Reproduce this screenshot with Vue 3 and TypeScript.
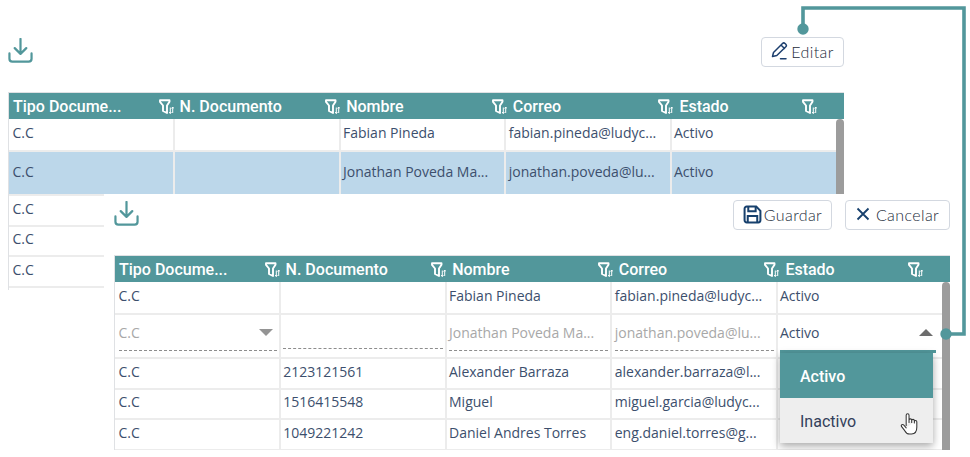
<script setup lang="ts">
const headers = ['Tipo Docume...', 'N. Documento', 'Nombre', 'Correo', 'Estado']
const topRows = [
  { cells: ['C.C', '', 'Fabian Pineda', 'fabian.pineda@ludyc...', 'Activo'], cls: 'first' },
  { cells: ['C.C', '', 'Jonathan Poveda Ma...', 'jonathan.poveda@lu...', 'Activo'], cls: 'selected tall' },
  { cells: ['C.C', '', '', '', ''], cls: '' },
  { cells: ['C.C', '', '', '', ''], cls: '' },
  { cells: ['C.C', '', '', '', ''], cls: '' },
]
const lowerRows = [
  ['C.C', '2123121561', 'Alexander Barraza', 'alexander.barraza@l...', ''],
  ['C.C', '1516415548', 'Miguel', 'miguel.garcia@ludyc...', ''],
  ['C.C', '1049221242', 'Daniel Andres Torres', 'eng.daniel.torres@g...', ''],
]
</script>

<template>
  <div class="page">
    <section class="view">
      <div class="toolbar">
        <svg class="dl" viewBox="0 0 26 26" width="25" height="25"><path d="M13 1v15M7 10.500l6 6 6-6M1.500 16v5.500a3 3 0 0 0 3 3h17a3 3 0 0 0 3-3V16" fill="none" stroke="#52979b" stroke-width="2.300" stroke-linecap="round" stroke-linejoin="round"/></svg>
        <button class="btn edit">
          <svg viewBox="0 0 18 18" width="18" height="18"><path d="M1.500 14.500l1-4L11.500 1.500a1.800 1.800 0 0 1 2.500 0l.8.8a1.800 1.800 0 0 1 0 2.500L5.800 13.500zM10 3l3.500 3.500M9.500 16.800h5.500" fill="none" stroke="#1d3f6e" stroke-width="1.500" stroke-linecap="round" stroke-linejoin="round"/></svg>
          Editar
        </button>
      </div>
      <div class="grid top">
        <div class="head">
          <div v-for="h in headers" :key="h" class="hcell">
            <span>{{ h }}</span>
            <svg class="filter" viewBox="0 0 15 15" width="15" height="15"><path d="M1 1.200h9.500v1.600L8 6.500v7.500L4 12V6.500L1 2.800z" fill="none" stroke="#fff" stroke-width="1.900" stroke-linejoin="round"/><path d="M11.300 8.500v6M13.700 8v6M10.200 13l1.100 1.500 1.100-1.500M12.600 9.500l1.100-1.500 1.100 1.500" fill="none" stroke="#fff" stroke-width="1"/></svg>
          </div>
        </div>
        <div class="body">
          <div v-for="(r, i) in topRows" :key="i" class="row" :class="r.cls">
            <div v-for="(c, j) in r.cells" :key="j" class="cell">{{ c }}</div>
          </div>
          <div class="thumb"></div>
        </div>
      </div>
    </section>

    <section class="panel">
      <div class="toolbar">
        <svg class="dl" viewBox="0 0 26 26" width="25" height="25"><path d="M13 1v15M7 10.500l6 6 6-6M1.500 16v5.500a3 3 0 0 0 3 3h17a3 3 0 0 0 3-3V16" fill="none" stroke="#52979b" stroke-width="2.300" stroke-linecap="round" stroke-linejoin="round"/></svg>
        <div class="actions">
          <button class="btn save">
            <svg viewBox="0 0 18 18" width="19" height="19"><path d="M1.500 3.500a2 2 0 0 1 2-2h9l4 4v9a2 2 0 0 1-2 2h-11a2 2 0 0 1-2-2z" fill="none" stroke="#17406d" stroke-width="1.900"/><path d="M5 1.500v4.500h7V1.500M4.500 16.500V10.500h9v6" fill="none" stroke="#17406d" stroke-width="1.900"/></svg>
            Guardar
          </button>
          <button class="btn cancel">
            <svg viewBox="0 0 14 14" width="14" height="14"><path d="M1.500 1.500l11 11M12.500 1.500l-11 11" fill="none" stroke="#17406d" stroke-width="1.800"/></svg>
            Cancelar
          </button>
        </div>
      </div>
      <div class="grid lower">
        <div class="head">
          <div v-for="h in headers" :key="h" class="hcell">
            <span>{{ h }}</span>
            <svg class="filter" viewBox="0 0 15 15" width="15" height="15"><path d="M1 1.200h9.500v1.600L8 6.500v7.500L4 12V6.500L1 2.800z" fill="none" stroke="#fff" stroke-width="1.900" stroke-linejoin="round"/><path d="M11.300 8.500v6M13.700 8v6M10.200 13l1.100 1.500 1.100-1.500M12.600 9.500l1.100-1.500 1.100 1.500" fill="none" stroke="#fff" stroke-width="1"/></svg>
          </div>
        </div>
        <div class="body">
          <div class="row first">
            <div class="cell">C.C</div><div class="cell"></div><div class="cell">Fabian Pineda</div><div class="cell">fabian.pineda@ludyc...</div><div class="cell">Activo</div>
          </div>
          <div class="row tall editing">
            <div class="cell"><div class="field muted dotted"><span>C.C</span><i class="caret down"></i></div></div>
            <div class="cell"><div class="field muted dotted low"></div></div>
            <div class="cell"><div class="field muted dotted"><span>Jonathan Poveda Ma...</span></div></div>
            <div class="cell"><div class="field muted dotted"><span>jonathan.poveda@lu...</span></div></div>
            <div class="cell"><div class="field active"><span>Activo</span><i class="caret up"></i></div></div>
          </div>
          <div v-for="(r, i) in lowerRows" :key="i" class="row">
            <div v-for="(c, j) in r" :key="j" class="cell">{{ c }}</div>
          </div>
          <div class="thumb"></div>
          <div class="menu">
            <div class="opt on">Activo</div>
            <div class="opt hover">Inactivo</div>
            <svg class="hand" viewBox="0 0 20 26" width="19" height="25"><path d="M6.500 14V3.200a1.500 1.500 0 0 1 3 0V11m0-2.500a1.400 1.400 0 0 1 2.800 0V11m0-2a1.400 1.400 0 0 1 2.800 0v2.500m0-1.500a1.300 1.300 0 0 1 2.600 0v6c0 4-2 7-5.500 7H10c-2.500 0-4-1.500-5-3.500L1.500 15c-.8-1.400 1.200-2.700 2.300-1.500l2.700 3" fill="#fff" stroke="#333" stroke-width="1.100" stroke-linejoin="round" stroke-linecap="round"/></svg>
          </div>
        </div>
      </div>
    </section>

    <svg class="wire" viewBox="0 0 970 457" width="970" height="457">
      <path d="M803 29V8H964V334H946" fill="none" stroke="#52979b" stroke-width="3.600"/>
      <circle cx="803" cy="29" r="5.700" fill="#52979b"/>
      <circle cx="946" cy="334" r="5.700" fill="#52979b"/>
    </svg>
  </div>
</template>

<style scoped>
.page {
  position: relative;
  width: 970px;
  height: 457px;
  overflow: hidden;
  background: #fff;
  font-family: "Open Sans", sans-serif;
  color: #3c4f6d;
}
.view {
  width: 836px;
  margin-left: 8px;
  padding-top: 37px;
}
.toolbar {
  display: flex;
  justify-content: space-between;
  align-items: flex-start;
  height: 55px;
}
.dl {
  display: block;
  margin-top: 1px;
}
.btn {
  display: inline-flex;
  align-items: center;
  justify-content: center;
  gap: 2px;
  height: 30px;
  box-sizing: border-box;
  border: 1px solid #d3d8e0;
  border-radius: 4px;
  background: #fff;
  padding: 0 0 2px;
  font-family: "Lato", sans-serif;
  font-size: 16px;
  font-weight: 300;
  letter-spacing: 0.4px;
  color: #222b3a;
}
.edit {
  width: 83px;
}
.save {
  width: 99px;
}
.cancel {
  width: 105px;
  gap: 6px;
}
.actions {
  display: flex;
  gap: 13px;
}
.grid {
  border-left: 1px solid #dfe1e4;
  overflow: hidden;
}
.top {
  height: 198px;
}
.lower {
  height: 195px;
}
.head {
  display: grid;
  grid-template-columns: repeat(4, 166.6px) 1fr;
  height: 26px;
  background: #52979b;
  border-top: 1px solid #dfe1e4;
}
.hcell {
  position: relative;
  display: flex;
  align-items: center;
  padding-left: 4px;
  font-family: "Roboto", sans-serif;
  font-weight: 500;
  font-size: 16px;
  color: #fff;
}
.filter {
  position: absolute;
  top: 6px;
  right: 2px;
}
.hcell:last-child .filter {
  right: 27px;
}
.body {
  position: relative;
  padding-right: 8px;
}
.row {
  display: grid;
  grid-template-columns: repeat(4, 165.75px) 1fr;
  height: 28.5px;
  border-bottom: 2px solid #ececec;
}
.row.first {
  height: 30.5px;
}
.row.tall {
  height: 42.5px;
}
.cell {
  border-right: 2px solid #ececec;
  padding: 2.500px 2px 0 2.500px;
  font-size: 14px;
  line-height: 20px;
  white-space: nowrap;
  overflow: hidden;
  box-sizing: border-box;
}
.cell:first-child {
  padding-left: 3.500px;
}
.cell:last-child {
  border-right: 0;
  padding-left: 2px;
}
.first .cell {
  padding-top: 4px;
}
.selected {
  background: #bcd7ea;
}
.selected .cell {
  padding-top: 10px;
}
.thumb {
  position: absolute;
  top: 0;
  right: 0;
  bottom: 0;
  width: 8px;
  background: #9c9c9c;
  border-radius: 4px 4px 0 0;
}
.panel {
  position: absolute;
  left: 104px;
  top: 194px;
  width: 866px;
  height: 263px;
  background: #fff;
  padding: 6px 20px 0 10px;
  box-sizing: border-box;
}
.field {
  display: flex;
  align-items: center;
  justify-content: space-between;
  height: 35px;
  box-sizing: border-box;
}
.editing .cell {
  padding-top: 1px;
}
.muted {
  color: #a8a8a8;
}
.dotted {
  border-bottom: 1px dashed #8d8d8d;
}
.low {
  height: 33px;
}
.active {
  height: 37px;
  margin-right: 4px;
  border-bottom: 3px solid #52979b;
  color: #3c4f6d;
}
.caret {
  width: 0;
  height: 0;
  border-left: 7px solid transparent;
  border-right: 7px solid transparent;
  margin-right: 4px;
}
.down {
  border-top: 7px solid #949494;
}
.up {
  border-bottom: 7px solid #6d6d6d;
  margin-right: 3px;
}
.menu {
  position: absolute;
  top: 71px;
  left: 665px;
  width: 153px;
  height: 90px;
  box-shadow: 0 3px 8px rgba(0, 0, 0, 0.35);
}
.opt {
  display: flex;
  align-items: center;
  height: 45px;
  box-sizing: border-box;
  padding: 2px 0 0 20px;
  font-family: "Roboto", sans-serif;
  font-size: 16px;
}
.on {
  background: #52979b;
  color: #fff;
  font-weight: 500;
}
.hover {
  background: #eeeeee;
  color: #33405a;
}
.hand {
  position: absolute;
  right: 14px;
  top: 59px;
}
.wire {
  position: absolute;
  left: 0;
  top: 0;
  pointer-events: none;
}
</style>
